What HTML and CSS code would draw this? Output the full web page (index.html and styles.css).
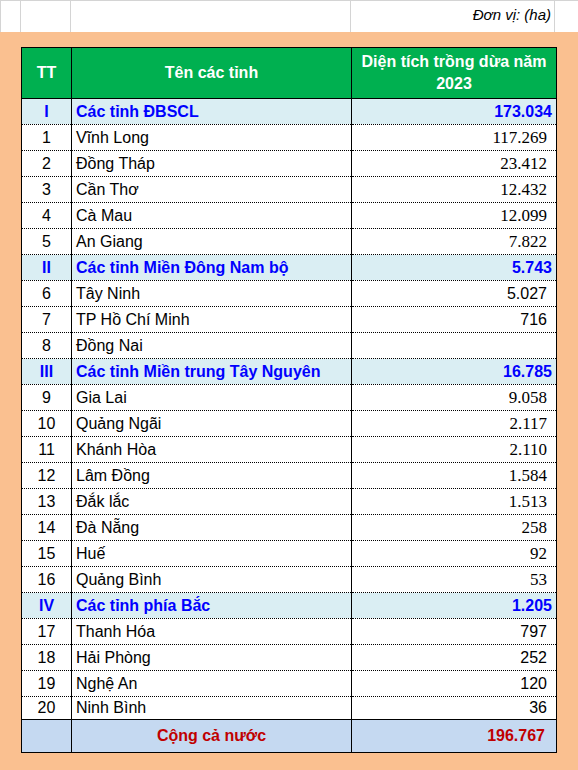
FILE: index.html
```html
<!DOCTYPE html>
<html lang="vi">
<head>
<meta charset="utf-8">
<link rel="stylesheet" href="styles.css">
</head>
<body>
<div class="page">
  <div class="toprow">
    <div class="gc c0"></div>
    <div class="gc c1"></div>
    <div class="gc c2"></div>
    <div class="gc c3 unit">Đơn vị: (ha)</div>
    <div class="gc c4"></div>
  </div>
  <div class="sheet">
    <table class="data">
      <colgroup><col class="w1"><col class="w2"><col class="w3"></colgroup>
      <thead>
        <tr class="head"><th>TT</th><th>Tên các tỉnh</th><th>Diện tích trồng dừa năm 2023</th></tr>
      </thead>
      <tbody>
        <tr class="grp"><td class="tt">I</td><td>Các tỉnh ĐBSCL</td><td class="num">173.034</td></tr>
        <tr><td class="tt">1</td><td>Vĩnh Long</td><td class="num serif">117.269</td></tr>
        <tr><td class="tt">2</td><td>Đồng Tháp</td><td class="num serif">23.412</td></tr>
        <tr><td class="tt">3</td><td>Cần Thơ</td><td class="num serif">12.432</td></tr>
        <tr><td class="tt">4</td><td>Cà Mau</td><td class="num serif">12.099</td></tr>
        <tr><td class="tt">5</td><td>An Giang</td><td class="num serif">7.822</td></tr>
        <tr class="grp"><td class="tt">II</td><td>Các tỉnh Miền Đông Nam bộ</td><td class="num">5.743</td></tr>
        <tr><td class="tt">6</td><td>Tây Ninh</td><td class="num">5.027</td></tr>
        <tr><td class="tt">7</td><td>TP Hồ Chí Minh</td><td class="num">716</td></tr>
        <tr><td class="tt">8</td><td>Đồng Nai</td><td class="num"></td></tr>
        <tr class="grp"><td class="tt">III</td><td>Các tỉnh Miền trung Tây Nguyên</td><td class="num">16.785</td></tr>
        <tr><td class="tt">9</td><td>Gia Lai</td><td class="num serif">9.058</td></tr>
        <tr><td class="tt">10</td><td>Quảng Ngãi</td><td class="num serif">2.117</td></tr>
        <tr><td class="tt">11</td><td>Khánh Hòa</td><td class="num serif">2.110</td></tr>
        <tr><td class="tt">12</td><td>Lâm Đồng</td><td class="num serif">1.584</td></tr>
        <tr><td class="tt">13</td><td>Đắk lắc</td><td class="num serif">1.513</td></tr>
        <tr><td class="tt">14</td><td>Đà Nẵng</td><td class="num serif">258</td></tr>
        <tr><td class="tt">15</td><td>Huế</td><td class="num serif">92</td></tr>
        <tr><td class="tt">16</td><td>Quảng Bình</td><td class="num serif">53</td></tr>
        <tr class="grp"><td class="tt">IV</td><td>Các tỉnh phía Bắc</td><td class="num">1.205</td></tr>
        <tr><td class="tt">17</td><td>Thanh Hóa</td><td class="num">797</td></tr>
        <tr><td class="tt">18</td><td>Hải Phòng</td><td class="num">252</td></tr>
        <tr><td class="tt">19</td><td>Nghệ An</td><td class="num">120</td></tr>
        <tr class="last"><td class="tt">20</td><td>Ninh Bình</td><td class="num">36</td></tr>
        <tr class="total"><td class="tt"></td><td class="center">Cộng cả nước</td><td class="num">196.767</td></tr>
      </tbody>
    </table>
  </div>
</div>
</body>
</html>
```

FILE: styles.css
```css
* { box-sizing: border-box; }
html, body { margin: 0; padding: 0; background: #fff; }
body { font-family: "Liberation Sans", Arial, sans-serif; font-size: 16px; color: #000; }

.page { width: 578px; height: 770px; overflow: hidden; }

.toprow {
  display: grid;
  grid-template-columns: 21px 50px 280px 204px 23px;
  height: 32px;
  border-top: 1px solid #d4d4d4;
}
.gc { border-right: 1px solid #d4d4d4; }
.c0 { border-left: 1px solid #d4d4d4; }
.c4 { border-right: none; }
.unit {
  font-style: italic;
  font-size: 15px;
  text-align: right;
  padding: 5px 3px 0 0;
}

.sheet {
  background: #fac090;
  height: 738px;
  padding: 15px 0 0 21px;
}

.data {
  border-collapse: collapse;
  table-layout: fixed;
  width: 535px;
  background: #fff;
}
.w1 { width: 50px; }
.w2 { width: 280px; }
.w3 { width: 205px; }

.data th, .data td {
  border-left: 1px solid #000;
  border-right: 1px solid #000;
  padding: 0 4px;
  white-space: nowrap;
  overflow: hidden;
}
.data td {
  height: 26px;
  border-top: 1px dotted #000;
  border-bottom: 1px dotted #000;
  line-height: 18px;
}

.head th {
  background: #00b050;
  color: #fff;
  font-weight: bold;
  height: 51px;
  border-top: 1px solid #000;
  border-bottom: 1px solid #000;
  text-align: center;
  white-space: normal;
  line-height: 22px;
  padding: 0 2px;
}

.tt { text-align: center; }
.num { text-align: right; padding-right: 9px !important; }
.serif { font-family: "Liberation Serif", "Times New Roman", serif; font-size: 17px; }

.grp td {
  background: #daeef3;
  color: #0000ff;
  font-weight: bold;
}
.grp .num { padding-right: 4px !important; }

.last td { height: 23px; border-bottom: 1px solid #000; }

.total td {
  background: #c5d9f1;
  color: #c00000;
  font-weight: bold;
  height: 33px;
  border-top: 1px solid #000;
  border-bottom: 1px solid #000;
}
.total .num { padding-right: 11px !important; }
.center { text-align: center; }
```
